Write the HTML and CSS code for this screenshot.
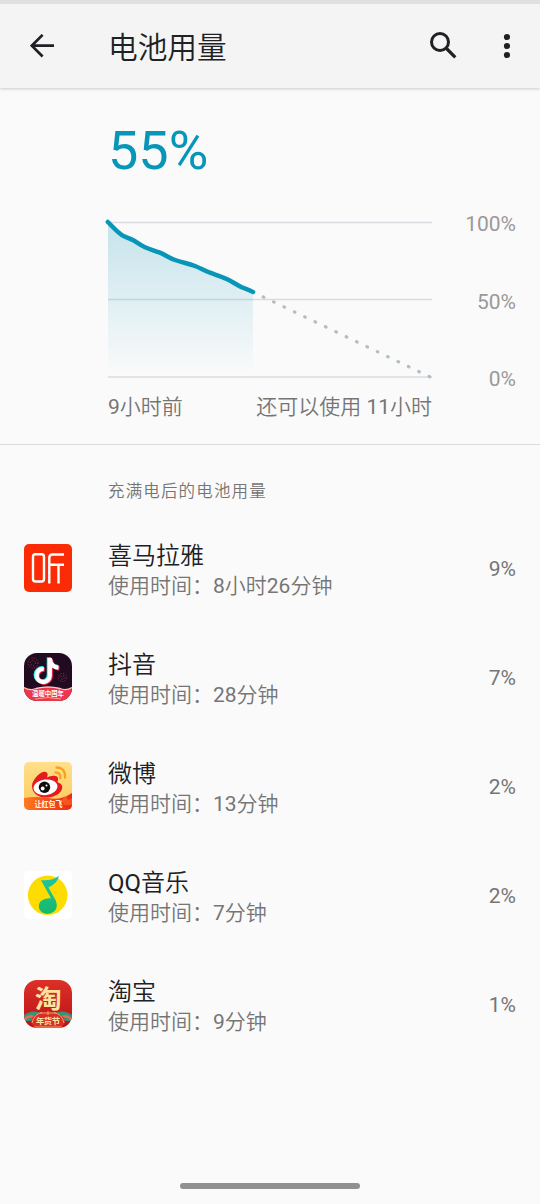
FILE: index.html
```html
<!DOCTYPE html>
<html lang="zh-CN">
<head>
<meta charset="utf-8">
<title>电池用量</title>
<link rel="stylesheet" href="styles.css">
</head>
<body>
<div class="screen">
  <header class="bar">
    <svg class="back" width="24" height="24" viewBox="0 0 24 24"><path d="M24 11.700H2M12.600 .9L1.800 11.700l10.800 10.800" fill="none" stroke="#202124" stroke-width="2.7"/></svg>
    <h1 class="title">电池用量</h1>
    <svg class="search" width="28" height="28" viewBox="0 0 28 28"><circle cx="10" cy="10" r="8.5" fill="none" stroke="#202124" stroke-width="3"/><path d="M16 16L25.300 25.300" stroke="#202124" stroke-width="3.2"/></svg>
    <svg class="more" width="8" height="26" viewBox="0 0 8 26"><g fill="#202124"><circle cx="4" cy="4" r="3.1"/><circle cx="4" cy="13" r="3.1"/><circle cx="4" cy="22" r="3.1"/></g></svg>
  </header>

  <section class="summary">
    <div class="level">55%</div>
    <div class="graph">
      <svg class="plot" width="324" height="156" viewBox="108 222 324 156">
        <defs><linearGradient id="fade" x1="0" y1="222" x2="0" y2="375" gradientUnits="userSpaceOnUse"><stop offset="0" stop-color="#0795b8" stop-opacity=".22"/><stop offset="1" stop-color="#0795b8" stop-opacity="0"/></linearGradient></defs>
        <path d="M108 222.5H432M108 299.5H432M108 377H432" stroke="#d9dce0" stroke-width="1.3"/>
        <path d="M108 222C113 227 117 232 122.300 235.300C126 237.500 129 238 133.300 240.300C138 243 140 245 145 247.300C150 249.500 154 250.300 160 252.700C166 255.200 169 257.800 175 260C182 262.500 188 263.300 195 266C201 268.300 204 270.500 210 272.700C216 274.900 221 276.300 226.700 279C232 281.500 237 285 241.700 287.300C246 289.200 250 290 253 292V377H108Z" fill="url(#fade)"/>
        <path d="M107.800 222C113 227 117 232 122.300 235.300C126 237.500 129 238 133.300 240.300C138 243 140 245 145 247.300C150 249.500 154 250.300 160 252.700C166 255.200 169 257.800 175 260C182 262.500 188 263.300 195 266C201 268.300 204 270.500 210 272.700C216 274.900 221 276.300 226.700 279C232 281.500 237 285 241.700 287.300C246 289.200 250 290 253 292" fill="none" stroke="#0795b8" stroke-width="4.500" stroke-linecap="round" stroke-linejoin="round"/>
        <path d="M263.200 296.900L430.200 377" fill="none" stroke="#b2bdc4" stroke-width="3.200" stroke-linecap="round" stroke-dasharray=".7 10.800"/>
      </svg>
      <div class="scale"><span>100%</span><span>50%</span><span>0%</span></div>
    </div>
    <div class="times"><span>9小时前</span><span>还可以使用 11小时</span></div>
  </section>

  <h2 class="section">充满电后的电池用量</h2>
  <ul class="apps">
    <li class="app">
      <svg class="icon" viewBox="0 0 48 48"><rect width="48" height="48" rx="5" fill="#fb2b05"/><g fill="none" stroke="#fff" stroke-width="2.400"><rect x="9" y="10.300" width="11" height="27.200" rx="2.500"/><path d="M40 10.500H28.500Q25.300 10.500 25.300 14V39.500M25.300 20.700H40M34.500 20.700V39.500"/></g></svg>
      <div class="text"><div class="name">喜马拉雅</div><div class="used">使用时间：8小时26分钟</div></div><div class="share">9%</div>
    </li>
    <li class="app">
      <svg class="icon" viewBox="0 0 48 48">
        <clipPath id="dy"><rect width="48" height="48" rx="13"/></clipPath>
        <g clip-path="url(#dy)"><rect width="48" height="48" fill="#210b20"/>
          <g fill="none" stroke="#9d3c50" stroke-width="1" stroke-dasharray="1 1.700"><circle cx="9" cy="10" r="5"/><circle cx="9" cy="10" r="2.500"/><circle cx="38.500" cy="24.500" r="4"/><circle cx="38.500" cy="24.500" r="1.800"/></g>
          <path d="M0 34.500Q6 38 12 35.500Q24 32.500 36 35.500Q42 38 48 34.500V48H0Z" fill="#ed354c"/>
          <path d="M0 34.500Q6 38 12 35.500Q24 32.500 36 35.500Q42 38 48 34.500" fill="none" stroke="#ffc5bd" stroke-width="1.300"/>
          <g fill="none" stroke-width="4.300"><g stroke="#24eee8" transform="translate(-.9 -.7)"><path d="M25.800 5V22.500a6.600 6.600 0 1 1-6-6.600M25.800 6c.8 5 4 8.300 8.700 8.700"/></g><g stroke="#fa2857" transform="translate(.9 .7)"><path d="M25.800 5V22.500a6.600 6.600 0 1 1-6-6.600M25.800 6c.8 5 4 8.300 8.700 8.700"/></g><path d="M25.800 5V22.500a6.600 6.600 0 1 1-6-6.600M25.800 6c.8 5 4 8.300 8.700 8.700" stroke="#fff"/></g>
          <text class="tag" x="24" y="42.800" font-size="6.300" textLength="32" lengthAdjust="spacingAndGlyphs">温暖中国年</text>
          <path d="M11 46Q24 43 37 46" stroke="#ff9a90" fill="none"/>
        </g>
      </svg>
      <div class="text"><div class="name">抖音</div><div class="used">使用时间：28分钟</div></div><div class="share">7%</div>
    </li>
    <li class="app">
      <svg class="icon" viewBox="0 0 48 48">
        <defs><linearGradient id="gold" x1="0" y1="0" x2="0" y2="1"><stop offset="0" stop-color="#ffe08b"/><stop offset="1" stop-color="#fbc95a"/></linearGradient><linearGradient id="flame"><stop offset="0" stop-color="#ff7b21"/><stop offset=".45" stop-color="#fa5016"/><stop offset="1" stop-color="#ee2a11"/></linearGradient><clipPath id="wb"><rect width="48" height="48" rx="5"/></clipPath></defs>
        <g clip-path="url(#wb)"><rect width="48" height="48" fill="url(#gold)"/>
          <path d="M0 36Q12 34 24 36Q36 39 48 31V48H0Z" fill="url(#flame)"/>
          <path d="M38 38l4-5 2 5 4-2v7h-8z" fill="#f98f3a" opacity=".4"/>
          <path d="M8 24C8 17 18 8 22 10C25 11.500 23 15 23 15.500C27 13.500 33 12.500 34 16C34.500 18 33.300 20 33.500 20.300C37.500 21.500 39 24 38 27C36 33 28 36 21 35.500C13 35 8 30.500 8 24Z" fill="#e61b20"/>
          <ellipse cx="21.500" cy="25.300" rx="12" ry="7.800" fill="#fff" transform="rotate(-7 21.500 25.300)"/>
          <circle cx="20.500" cy="25.200" r="5.700" fill="#100b0b"/><circle cx="18.700" cy="26.500" r="1.900" fill="#fff"/><circle cx="22.500" cy="23.600" r="1" fill="#fff"/>
          <g fill="none" stroke="#f8a11c" stroke-linecap="round" stroke-width="2.300"><path d="M32.500 5.500Q41.500 5.500 41 15.500"/><path d="M31.500 10.500Q36.800 10.500 36.300 16"/></g>
          <text class="tag" x="24.500" y="45" font-size="7.500" textLength="28" lengthAdjust="spacingAndGlyphs">让红包飞</text>
        </g>
      </svg>
      <div class="text"><div class="name">微博</div><div class="used">使用时间：13分钟</div></div><div class="share">2%</div>
    </li>
    <li class="app">
      <svg class="icon" viewBox="0 0 48 48"><defs><linearGradient id="note" x1="0" y1="0" x2="0" y2="1"><stop offset="0" stop-color="#20c5a5"/><stop offset="1" stop-color="#16b968"/></linearGradient></defs><rect width="48" height="48" rx="5" fill="#fff"/><circle cx="23.700" cy="24.200" r="19.800" fill="#ffdc00"/><path d="M17 9.200Q29 10 34.800 4.800Q34.500 11.500 24.500 16.500L31.800 29.500Q34 36 31.300 39.200Q27.500 43.700 21 42.400C14.500 41 13 34 17 30Q21 26.500 27 27.300Z" fill="url(#note)"/></svg>
      <div class="text"><div class="name">QQ音乐</div><div class="used">使用时间：7分钟</div></div><div class="share">2%</div>
    </li>
    <li class="app">
      <svg class="icon" viewBox="0 0 48 48">
        <defs><linearGradient id="red" x1="0" y1="0" x2="0" y2="1"><stop offset="0" stop-color="#dc3028"/><stop offset="1" stop-color="#bb1116"/></linearGradient><clipPath id="tb"><rect width="48" height="48" rx="13"/></clipPath></defs>
        <g clip-path="url(#tb)"><rect width="48" height="48" fill="url(#red)"/>
          <path d="M0 35Q8 29 17 33L10 41H0ZM48 35Q40 29 31 33L38 41H48Z" fill="#32967c"/>
          <path d="M0 40Q6 33 13 39M35 39Q42 33 48 40" fill="none" stroke="#ef6c4b" stroke-width="2.500"/>
          <ellipse cx="24" cy="41" rx="17" ry="9" fill="#d82e25"/>
          <path d="M8 43Q10 34 18 32.500M40 43Q38 34 30 32.500M10 47H38M16 33H32M24 31V35" fill="none" stroke="#f4a36b" stroke-width="1"/>
          <text class="tao" x="24.300" y="27.600" font-size="25" textLength="27" lengthAdjust="spacingAndGlyphs">淘</text>
          <text class="tag cream" x="24" y="44.300" font-size="8.300" textLength="24">年货节</text>
        </g>
      </svg>
      <div class="text"><div class="name">淘宝</div><div class="used">使用时间：9分钟</div></div><div class="share">1%</div>
    </li>
  </ul>
  <div class="handle"></div>
</div>
</body>
</html>
```
FILE: styles.css
```css
* { box-sizing: border-box; }
body { margin: 0; background: #fafafa; font-family: Roboto, "Noto Sans CJK SC DemiLight", "Noto Sans CJK SC Light", "Noto Sans CJK SC", sans-serif; color: #202124; }
.screen { width: 540px; height: 1204px; display: flex; flex-direction: column; overflow: hidden; }
h1, h2, ul { margin: 0; padding: 0; font-weight: 400; list-style: none; }
svg { display: block; flex: none; }

.bar { height: 88px; flex: none; border-top: 4px solid #e0e0e0; background: #f4f4f4; display: flex; align-items: center; padding: 0 29px 0 30px; box-shadow: 0 1px 3px rgba(0, 0, 0, .2); }
.title { flex: 1; margin-left: 54px; padding-top: 3px; font-size: 29.7px; line-height: 44px; }
.search { margin-right: 45px; }

.summary { height: 357px; flex: none; padding: 31px 24px 0 108px; border-bottom: 1px solid #dadce0; }
.level { height: 64px; line-height: 64px; font-size: 54px; color: #0795b8; }
.graph { height: 156px; margin-top: 39px; display: flex; justify-content: space-between; }
.plot { overflow: visible; }
.scale { height: 180px; margin-top: -10px; display: flex; flex-direction: column; justify-content: space-between; text-align: right; font-size: 21px; line-height: 25px; color: #999; }
.times { width: 324px; margin-top: 17px; display: flex; justify-content: space-between; font-size: 21px; line-height: 24px; color: #757575; white-space: nowrap; }

.section { height: 68px; flex: none; padding: 35px 0 0 108px; font-size: 16.5px; line-height: 24px; letter-spacing: 1.15px; color: #757575; }
.app { height: 109px; display: flex; align-items: center; padding: 0 24px; }
.icon { width: 48px; height: 48px; }
.text { flex: 1; margin-left: 36px; padding-top: 5px; }
.name { font-size: 24px; line-height: 32px; }
.used { font-size: 21px; line-height: 29px; color: #757575; }
.share { padding-top: 2px; font-size: 21px; line-height: 28px; color: #757575; }
.tag, .tao { font-family: "Noto Sans CJK SC", sans-serif; font-weight: 700; text-anchor: middle; fill: #fff; }
.cream, .tao { fill: #fde3a0; }
.handle { width: 180px; height: 6px; margin: auto auto 15px; border-radius: 3px; background: #909090; }
```
